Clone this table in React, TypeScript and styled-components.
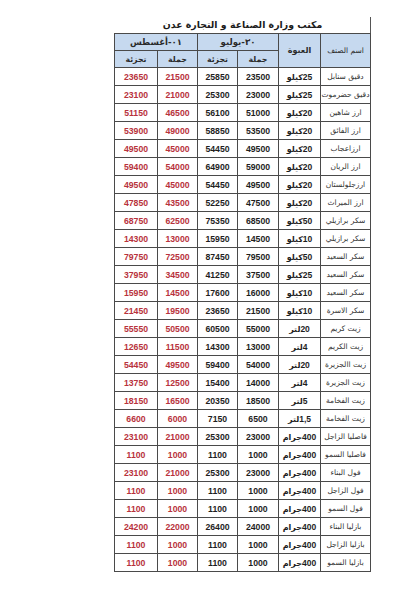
import styled, { createGlobalStyle } from 'styled-components';

const GlobalStyle = createGlobalStyle`
    html, body {
        margin: 0;
        padding: 0;
        background: #ffffff;
    }
    body {
        font-family: "Liberation Sans", "DejaVu Sans", sans-serif;
    }
`;

const StyledPage = styled.div`
    width: 400px;
    height: 593px;
    padding: 17px 0 0 115px;
    box-sizing: border-box;
`;

const StyledSheet = styled.div`
    width: 256px;
    direction: rtl;
`;

const StyledTitle = styled.div`
    height: 16px;
    line-height: 16px;
    border-right: 1px solid #555;
    text-align: center;
    font-family: "DejaVu Sans", sans-serif;
    font-weight: 700;
    font-size: 9.4px;
    color: #1c1c1c;
    white-space: nowrap;
`;

const StyledTable = styled.table`
    width: 256px;
    border-collapse: collapse;
    table-layout: fixed;
    border: 1.5px solid #444;
`;

const StyledHeadCell = styled.th<{ $size?: number }>`
    height: 16px;
    padding: 0;
    background: #c6d9ef;
    border: 1px solid #4a4a4a;
    font-family: "DejaVu Sans", sans-serif;
    font-size: ${(p) => p.$size ?? 8}px;
    font-weight: ${(p) => ((p.$size ?? 8) > 7.5 ? 700 : 400)};
    color: #2a2a2a;
    text-align: center;
    vertical-align: middle;
    white-space: nowrap;
`;

// mixed number + arabic word, laid out left to right with the number last
const StyledMixed = styled.span`
    display: inline-flex;
    direction: ltr;
    align-items: baseline;
`;

const StyledPart = styled.span`
    unicode-bidi: isolate;
`;

const StyledCell = styled.td<{ $tone?: 'red' | 'black' | 'name' | 'pack' }>`
    height: 17px;
    padding: 0;
    border: 1px solid #4a4a4a;
    text-align: center;
    vertical-align: middle;
    white-space: nowrap;
    overflow: hidden;
    font-size: ${(p) => (p.$tone === 'name' ? 7.5 : p.$tone === 'pack' ? 8.5 : 8.7)}px;
    font-weight: ${(p) => (p.$tone === 'name' ? 400 : 700)};
    color: ${(p) => (p.$tone === 'red' ? '#b8323c' : p.$tone === 'name' ? '#333' : '#1e1e1e')};
    font-family: ${(p) =>
        p.$tone === 'name' ? '"DejaVu Sans", sans-serif' : '"Liberation Sans", "DejaVu Sans", sans-serif'};
`;

const StyledUnit = styled(StyledPart)`
    font-family: "DejaVu Sans", sans-serif;
    font-size: 8px;
`;

type Row = [string, string, string, number, number, number, number];

// name, amount, unit, july wholesale, july retail, august wholesale, august retail
const rows: Row[] = [
    ['دقيق سنابل', '25', 'كيلو', 23500, 25850, 21500, 23650],
    ['دقيق حضرموت', '25', 'كيلو', 23000, 25300, 21000, 23100],
    ['ارز شاهين', '20', 'كيلو', 51000, 56100, 46500, 51150],
    ['ارز الفائق', '20', 'كيلو', 53500, 58850, 49000, 53900],
    ['ارزاعجاب', '20', 'كيلو', 49500, 54450, 45000, 49500],
    ['ارز الريان', '20', 'كيلو', 59000, 64900, 54000, 59400],
    ['ارزجلولستان', '20', 'كيلو', 49500, 54450, 45000, 49500],
    ['ارز الميراث', '20', 'كيلو', 47500, 52250, 43500, 47850],
    ['سكر برازيلي', '50', 'كيلو', 68500, 75350, 62500, 68750],
    ['سكر برازيلي', '10', 'كيلو', 14500, 15950, 13000, 14300],
    ['سكر السعيد', '50', 'كيلو', 79500, 87450, 72500, 79750],
    ['سكر السعيد', '25', 'كيلو', 37500, 41250, 34500, 37950],
    ['سكر السعيد', '10', 'كيلو', 16000, 17600, 14500, 15950],
    ['سكر الاسرة', '10', 'كيلو', 21500, 23650, 19500, 21450],
    ['زيت كريم', '20', 'لتر', 55000, 60500, 50500, 55550],
    ['زيت الكريم', '4', 'لتر', 13000, 14300, 11500, 12650],
    ['زيت االجزيرة', '20', 'لتر', 54000, 59400, 49500, 54450],
    ['زيت الجزيرة', '4', 'لتر', 14000, 15400, 12500, 13750],
    ['زيت الفخامة', '5', 'لتر', 18500, 20350, 16500, 18150],
    ['زيت الفخامة', '1,5', 'لتر', 6500, 7150, 6000, 6600],
    ['فاصليا الزاجل', '400', 'جرام', 23000, 25300, 21000, 23100],
    ['فاصليا السمو', '400', 'جرام', 1000, 1100, 1000, 1100],
    ['فول البناء', '400', 'جرام', 23000, 25300, 21000, 23100],
    ['فول الزاجل', '400', 'جرام', 1000, 1100, 1000, 1100],
    ['فول السمو', '400', 'جرام', 1000, 1100, 1000, 1100],
    ['بازليا البناء', '400', 'جرام', 24000, 26400, 22000, 24200],
    ['بازليا الزاجل', '400', 'جرام', 1000, 1100, 1000, 1100],
    ['بازليا السمو', '400', 'جرام', 1000, 1100, 1000, 1100],
];

function DateLabel({ day, month }: { day: string; month: string }) {
    return (
        <StyledMixed>
            <StyledPart>{month}</StyledPart>
            <StyledPart>-</StyledPart>
            <StyledPart>{day}</StyledPart>
        </StyledMixed>
    );
}

export default function App() {
    return (
        <>
            <GlobalStyle />
            <StyledPage>
                <StyledSheet>
                    <StyledTitle>مكتب وزارة الصناعة و التجارة عدن</StyledTitle>
                    <StyledTable>
                        <colgroup>
                            <col style={{ width: 50 }} />
                            <col style={{ width: 42 }} />
                            <col style={{ width: 41 }} />
                            <col style={{ width: 40 }} />
                            <col style={{ width: 40 }} />
                            <col style={{ width: 43 }} />
                        </colgroup>
                        <thead>
                            <tr>
                                <StyledHeadCell rowSpan={2} $size={7.5}>اسم الصنف</StyledHeadCell>
                                <StyledHeadCell rowSpan={2} $size={8}>العبوة</StyledHeadCell>
                                <StyledHeadCell colSpan={2} $size={8.6}>
                                    <DateLabel day='٣٠' month='يوليو' />
                                </StyledHeadCell>
                                <StyledHeadCell colSpan={2} $size={8.6}>
                                    <DateLabel day='٠١' month='أغسطس' />
                                </StyledHeadCell>
                            </tr>
                            <tr>
                                <StyledHeadCell $size={7.8}>جملة</StyledHeadCell>
                                <StyledHeadCell $size={7.8}>تجزئة</StyledHeadCell>
                                <StyledHeadCell $size={7.8}>جملة</StyledHeadCell>
                                <StyledHeadCell $size={7.8}>تجزئة</StyledHeadCell>
                            </tr>
                        </thead>
                        <tbody>
                            {rows.map(([name, amount, unit, jw, jr, aw, ar], i) => (
                                <tr key={i}>
                                    <StyledCell $tone='name'>{name}</StyledCell>
                                    <StyledCell $tone='pack'>
                                        <StyledMixed>
                                            <StyledUnit>{unit}</StyledUnit>
                                            <StyledPart>{amount}</StyledPart>
                                        </StyledMixed>
                                    </StyledCell>
                                    <StyledCell $tone='black'>{jw}</StyledCell>
                                    <StyledCell $tone='black'>{jr}</StyledCell>
                                    <StyledCell $tone='red'>{aw}</StyledCell>
                                    <StyledCell $tone='red'>{ar}</StyledCell>
                                </tr>
                            ))}
                        </tbody>
                    </StyledTable>
                </StyledSheet>
            </StyledPage>
        </>
    );
}
